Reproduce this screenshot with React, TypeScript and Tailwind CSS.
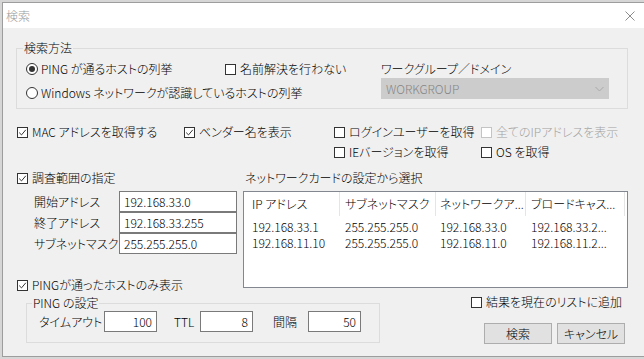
import React from "react";

function Box({ checked = false, disabled = false }: { checked?: boolean; disabled?: boolean }) {
  return (
    <span
      className={`w-[11px] h-[11px] border ${disabled ? "border-[#c4c4c4]" : "border-[#333333]"} bg-white flex items-center justify-center shrink-0`}
    >
      {checked && (
        <svg width="9" height="9" viewBox="0 0 9 9">
          <path d="M1.2 4.6 L3.5 6.9 L7.8 1.8" fill="none" stroke="#333333" strokeWidth="1" />
        </svg>
      )}
    </span>
  );
}

function CheckItem({
  label,
  checked = false,
  disabled = false,
  className = "",
}: {
  label: string;
  checked?: boolean;
  disabled?: boolean;
  className?: string;
}) {
  return (
    <div className={`flex items-center h-[16px] gap-[4px] whitespace-nowrap ${className}`}>
      <Box checked={checked} disabled={disabled} />
      <span className={disabled ? "text-[#a3a3a3]" : "text-black"}>{label}</span>
    </div>
  );
}

function Radio({ label, checked = false, className = "" }: { label: string; checked?: boolean; className?: string }) {
  return (
    <div className={`flex items-center h-[16px] gap-[3px] whitespace-nowrap ${className}`}>
      <span className="w-[12px] h-[12px] rounded-full border border-[#333333] bg-white flex items-center justify-center shrink-0">
        {checked && <span className="w-[6px] h-[6px] rounded-full bg-[#333333]" />}
      </span>
      <span>{label}</span>
    </div>
  );
}

function TextBox({ value, w, right = false }: { value: string; w: string; right?: boolean }) {
  return (
    <div
      className={`${w} h-[21px] border border-[#7a7a7a] bg-white flex items-center px-[4px] whitespace-nowrap ${right ? "justify-end" : "justify-start"}`}
    >
      {value}
    </div>
  );
}

export default function App() {
  const rows = [
    ["192.168.33.1", "255.255.255.0", "192.168.33.0", "192.168.33.2..."],
    ["192.168.11.10", "255.255.255.0", "192.168.11.0", "192.168.11.2..."],
  ];
  const cols = [
    { w: "w-[96px]", pl: "pl-[8px]" },
    { w: "w-[96px]", pl: "pl-[5px]" },
    { w: "w-[90px]", pl: "pl-[4px]" },
    { w: "w-[99px]", pl: "pl-[5px]" },
  ];
  const headers = ["IP アドレス", "サブネットマスク", "ネットワークア...", "ブロードキャス..."];

  return (
    <div className="w-[644px] h-[359px] overflow-hidden bg-[#d6d6d6] pt-[2px] pl-[2px] font-['Noto_Sans_CJK_JP','Noto_Sans',sans-serif] font-light [font-feature-settings:'palt'] text-[12px] leading-[16px] text-black">
      <div className="w-[660px] h-[355px] border border-[#9d9d9d] bg-[#f0f0f0] flex flex-col">
        {/* Title bar */}
        <div className="h-[25px] bg-white flex items-center shrink-0">
          <span className="ml-[3px] text-[#9a9a9a]">検索</span>
          <div className="ml-auto mr-[26px] w-[10px] h-[10px]">
            <svg width="10" height="10" viewBox="0 0 10 10">
              <path d="M0.5 0.5 L9.5 9.5 M9.5 0.5 L0.5 9.5" stroke="#8c8c8c" strokeWidth="1" fill="none" />
            </svg>
          </div>
        </div>

        {/* Body */}
        <div className="flex flex-col">
          {/* 検索方法 */}
          <fieldset className="mt-[12px] ml-[13px] w-[612px] border border-[#dcdcdc]">
            <legend className="ml-[6px] px-[1px] leading-[16px]">検索方法</legend>
            <div className="flex pt-[5px] pb-[7px] pl-[9px]">
              <div className="w-[355px] flex flex-col gap-[8px]">
                <div className="flex">
                  <Radio label="PING が通るホストの列挙" checked className="w-[199px]" />
                  <CheckItem label="名前解決を行わない" />
                </div>
                <Radio label="Windows ネットワークが認識しているホストの列挙" />
              </div>
              <div className="flex flex-col">
                <div className="h-[16px] whitespace-nowrap">ワークグループ／ドメイン</div>
                <div className="mt-[1px] w-[228px] h-[21px] bg-[#cccccc] border border-[#cccccc] flex items-center justify-between pl-[4px] pr-[4px] text-[#858585]">
                  <span>WORKGROUP</span>
                  <svg width="9" height="6" viewBox="0 0 9 6">
                    <path d="M0.5 1 L4.5 5 L8.5 1" stroke="#a9a9a9" strokeWidth="1" fill="none" />
                  </svg>
                </div>
              </div>
            </div>
          </fieldset>

          {/* Options */}
          <div className="mt-[15px] ml-[14px] flex">
            <div className="w-[317px] flex items-start">
              <CheckItem label="MAC アドレスを取得する" checked className="w-[167px]" />
              <CheckItem label="ベンダー名を表示" checked />
            </div>
            <div className="grid grid-cols-[147px_auto] gap-y-[4px]">
              <CheckItem label="ログインユーザーを取得" />
              <CheckItem label="全てのIPアドレスを表示" disabled />
              <CheckItem label="IEバージョンを取得" />
              <CheckItem label="OS を取得" />
            </div>
          </div>

          {/* Middle */}
          <div className="mt-[10px] ml-[14px] flex items-start">
            <div className="w-[226px] flex flex-col">
              <CheckItem label="調査範囲の指定" checked />
              <div className="mt-[5px] flex flex-col">
                <div className="flex items-center h-[21px] pl-[17px]">
                  <span className="w-[85px] whitespace-nowrap">開始アドレス</span>
                  <TextBox value="192.168.33.0" w="w-[118px]" />
                </div>
                <div className="flex items-center h-[21px] pl-[17px]">
                  <span className="w-[85px] whitespace-nowrap">終了アドレス</span>
                  <TextBox value="192.168.33.255" w="w-[118px]" />
                </div>
                <div className="flex items-center h-[21px] pl-[17px]">
                  <span className="w-[85px] whitespace-nowrap">サブネットマスク</span>
                  <TextBox value="255.255.255.0" w="w-[118px]" />
                </div>
              </div>
              <CheckItem label="PINGが通ったホストのみ表示" checked className="mt-[23px]" />
            </div>
            <div className="w-[385px] flex flex-col">
              <div className="h-[16px] pl-[2px] whitespace-nowrap">ネットワークカードの設定から選択</div>
              <div className="mt-[5px] h-[97px] border border-[#828790] bg-white flex flex-col">
                <div className="h-[24px] flex">
                  {headers.map((h, i) => (
                    <div
                      key={i}
                      className={`${cols[i].w} ${cols[i].pl} h-full border-r border-[#e5e5e5] flex items-center whitespace-nowrap overflow-hidden`}
                    >
                      {h}
                    </div>
                  ))}
                </div>
                <div className="mt-[3px] flex flex-col">
                  {rows.map((r, ri) => (
                    <div key={ri} className="h-[16px] flex">
                      {r.map((c, ci) => (
                        <div key={ci} className={`${cols[ci].w} ${cols[ci].pl} whitespace-nowrap overflow-hidden`}>
                          {c}
                        </div>
                      ))}
                    </div>
                  ))}
                </div>
              </div>
            </div>
          </div>

          {/* Bottom */}
          <div className="flex items-start">
            <fieldset className="mt-[2px] ml-[23px] w-[354px] border border-[#dcdcdc]">
              <legend className="ml-[5px] px-[1px] leading-[16px]">PING の設定</legend>
              <div className="flex items-center h-[21px] pl-[12px] mb-[10px]">
                <span className="w-[65px] whitespace-nowrap">タイムアウト</span>
                <TextBox value="100" w="w-[53px]" right />
                <span className="ml-[17px] w-[26px]">TTL</span>
                <TextBox value="8" w="w-[53px]" right />
                <span className="ml-[20px] w-[35px]">間隔</span>
                <TextBox value="50" w="w-[53px]" right />
              </div>
            </fieldset>
            <div className="ml-[91px] w-[154px] flex flex-col items-end">
              <CheckItem label="結果を現在のリストに追加" className="mt-[1px] self-start" />
              <div className="mt-[13px] flex gap-[5px]">
                <button className="w-[68px] h-[21px] bg-[#e1e1e1] border border-[#adadad] flex items-center justify-center">
                  検索
                </button>
                <button className="w-[68px] h-[21px] bg-[#e1e1e1] border border-[#adadad] flex items-center justify-center">
                  キャンセル
                </button>
              </div>
            </div>
          </div>
        </div>
      </div>
    </div>
  );
}
